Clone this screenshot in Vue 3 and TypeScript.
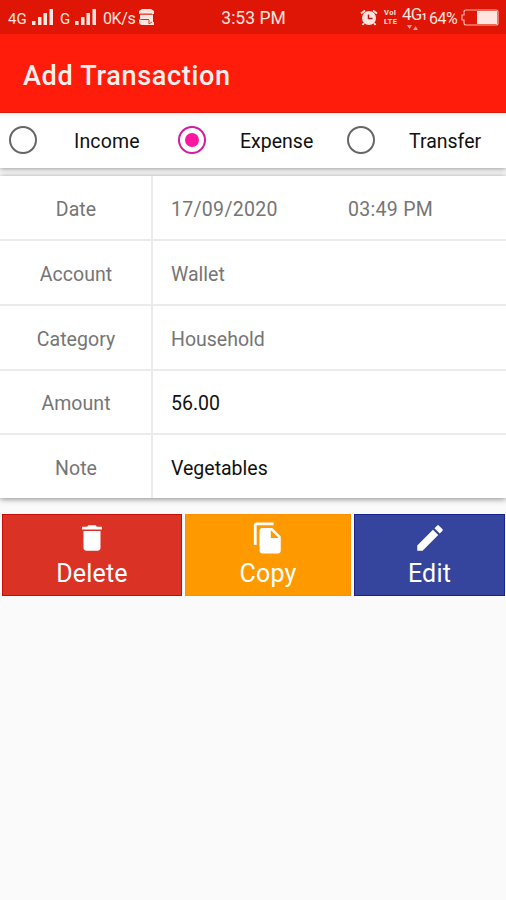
<script setup lang="ts">
interface Choice { id: string; label: string }
interface Row { label: string; value: string; extra?: string; strong?: boolean }

const selected = 'expense'
const choices: Choice[] = [
  { id: 'income', label: 'Income' },
  { id: 'expense', label: 'Expense' },
  { id: 'transfer', label: 'Transfer' },
]
const rows: Row[] = [
  { label: 'Date', value: '17/09/2020', extra: '03:49 PM' },
  { label: 'Account', value: 'Wallet' },
  { label: 'Category', value: 'Household' },
  { label: 'Amount', value: '56.00', strong: true },
  { label: 'Note', value: 'Vegetables', strong: true },
]
const actions = [
  { id: 'delete', label: 'Delete', path: 'M6 19c0 1.100.9 2 2 2h8c1.100 0 2-.9 2-2V7H6v12zM19 4h-3.500l-1-1h-5l-1 1H5v2h14V4z' },
  { id: 'copy', label: 'Copy', path: 'M16 1H4c-1.100 0-2 .9-2 2v14h2V3h12V1zm-1 4l6 6v10c0 1.100-.9 2-2 2H7.990C6.890 23 6 22.100 6 21l.01-14c0-1.100.89-2 1.990-2h7zm-1 7h5.500L14 6.500V12z' },
  { id: 'edit', label: 'Edit', path: 'M3 17.250V21h3.750L17.810 9.940l-3.750-3.750L3 17.250zM20.710 7.040c.39-.39.39-1.020 0-1.410l-2.340-2.340c-.39-.39-1.020-.39-1.410 0l-1.830 1.830 3.750 3.750 1.830-1.830z' },
]
</script>

<template>
  <main class="screen">
    <div class="status">
      <div class="left">
        <span class="net">4G</span>
        <svg class="bars" viewBox="0 0 21 16"><path d="M0 12h3.500v4H0zM6 8h3.500v8H6zM11.500 4H15v12h-3.500zM17.500 0H21v16h-3.500z" /></svg>
        <span class="net g">G</span>
        <svg class="bars" viewBox="0 0 21 16"><path d="M0 12h3.500v4H0zM6 8h3.500v8H6zM11.500 4H15v12h-3.500zM17.500 0H21v16h-3.500z" /></svg>
        <span class="speed">0K/s</span>
        <svg class="storage" viewBox="0 0 16 17"><path d="M3 0h9l3 2v3H0V2zM1 5.500h13V10H1zM0 10.500h10V16H2l-2-2z" /><path class="cut" d="M1 5h12M2 10.500h9" /><path d="M10 10h4v3h1v3h-5z" /><path class="cut" d="M10 11v4l3-2" /></svg>
      </div>
      <span class="clock">3:53 PM</span>
      <div class="right">
        <svg class="alarm" viewBox="0 0 18 17"><circle cx="9" cy="9" r="7" /><path class="line" d="M1 4.500l4-3M13 1.500l4 3M4 14l-1.500 2M14 14l1.500 2" /><path class="hand" d="M8.500 5.500v4h4" /></svg>
        <span class="volte"><span>VoI</span><span>LTE</span></span>
        <span class="data"><span>4G</span><small>1</small>
          <svg viewBox="0 0 12 5"><path d="M0 0h5L2.500 4zM6 5h5L8.500 1z" /></svg>
        </span>
        <span class="percent">64%</span>
        <svg class="battery" viewBox="0 0 38 17"><path class="outline" d="M5 1h30q2 0 2 2v11q0 2-2 2H5q-2 0-2-2v-3H1V6h2V3q0-2 2-2z" /><path d="M16 2h20v13H16z" /></svg>
      </div>
    </div>
    <header><h1>Add Transaction</h1></header>
    <div class="choices">
      <label v-for="c in choices" :key="c.id" :class="['choice', c.id]">
        <span :class="['radio', { on: c.id === selected }]"></span>
        <span class="name">{{ c.label }}</span>
      </label>
    </div>
    <section class="card">
      <div v-for="r in rows" :key="r.label" class="row">
        <div class="label">{{ r.label }}</div>
        <div :class="['value', { strong: r.strong, dated: r.extra }]">
          <span class="main">{{ r.value }}</span><span v-if="r.extra" class="time">{{ r.extra }}</span>
        </div>
      </div>
    </section>
    <nav class="actions">
      <button v-for="a in actions" :key="a.id" :class="a.id" type="button">
        <svg viewBox="0 0 24 24"><path :d="a.path" /></svg>
        <span>{{ a.label }}</span>
      </button>
    </nav>
  </main>
</template>

<style>
body { background: #fafafa; }
</style>

<style scoped>
.screen { height: 900px; overflow: hidden; background: #fafafa; font-family: Roboto, sans-serif; color: #111; }
.status { height: 34px; background: #df1505; color: #ffe5df; display: grid; grid-template-columns: 200px 107px 1fr; align-items: center; white-space: nowrap; }
.status svg { fill: currentColor; display: block; flex: none; }
.left { display: flex; align-items: center; padding: 3px 0 0 8px; font-size: 15px; }
.net { width: 24px; line-height: 17px; padding-top: 1px; }
.net.g { width: 15px; margin-left: 7px; }
.bars { width: 21px; height: 16px; margin-top: -3px; }
.speed { width: 36px; margin-left: 7px; font-size: 16px; line-height: 17px; letter-spacing: -.4px; }
.storage { width: 16px; height: 17px; margin-top: -3px; }
.cut { fill: none; stroke: #df1505; stroke-width: .8; }
.clock { font-size: 17.5px; text-align: center; padding: 1px 0 0 0; }
.right { display: flex; align-items: center; padding-left: 53px; }
.alarm { width: 18px; height: 17px; }
.alarm .line { stroke: currentColor; stroke-width: 2; }
.hand { fill: none; stroke: #b41b12; stroke-width: 1.5; }
.volte { display: flex; flex-direction: column; width: 17px; margin-left: 6px; font-size: 7.5px; line-height: 9px; font-weight: 700; letter-spacing: .4px; }
.data { position: relative; width: 27px; margin-left: 1px; font-size: 17px; line-height: 20px; padding-bottom: 3px; letter-spacing: -.7px; }
.data small { font-size: 9px; font-weight: 700; }
.data svg { position: absolute; left: 5px; bottom: 0; width: 12px; height: 5px; opacity: .65; }
.percent { width: 32px; font-size: 16px; padding-top: 2px; letter-spacing: -.5px; }
.battery { width: 38px; height: 17px; }
.outline { fill: none; stroke: #ffb4a5; stroke-width: 1.2; }
header { position: relative; z-index: 1; height: 79px; background: #ff1c0b; border-bottom: 1px solid #df1b0d; box-sizing: border-box; display: flex; align-items: center; padding: 5px 0 0 23px; }
h1 { margin: 0; font-size: 27px; line-height: 32px; font-weight: 500; color: #fff0ed; letter-spacing: .7px; }
.choices { height: 55px; display: grid; grid-template-columns: 169px 169px 168px; background: linear-gradient(#f1f3f1, #fff 6px); box-shadow: 0 1px 5px #0006; }
.choice { display: flex; align-items: center; padding-left: 9px; }
.radio { width: 28px; height: 28px; margin-bottom: 1px; box-sizing: border-box; border: 2px solid #666; border-radius: 50%; display: grid; place-items: center; flex: none; }
.radio.on { border-color: #d41ba2; }
.radio.on::after { content: ''; width: 14px; height: 14px; border-radius: 50%; background: #fa169f; }
.name { margin-left: 37px; padding-top: 1px; font-size: 19.5px; }
.income .name { letter-spacing: .15px; }
.expense .name, .transfer .name { margin-left: 34px; }
.card { margin-top: 8px; height: 322px; background: #fff; box-shadow: 0 1px 6px #0007; display: grid; grid-template-rows: 65px 65px 65px 64px 63px; font-size: 19.5px; color: #757575; position: relative; }
.row { display: grid; grid-template-columns: 153px 1fr; border-bottom: 2px solid #ebebeb; }
.row:last-child { border-bottom: 0; }
.label { display: grid; place-items: center; border-right: 2px solid #ebebeb; padding: 4px 0 0 1px; letter-spacing: .05px; }
.value { display: flex; align-items: center; padding: 4px 0 0 18px; }
.row:nth-child(4) .label, .row:nth-child(4) .value { padding-top: 2px; }
.dated { letter-spacing: .3px; }
.strong { color: #111; }
.main { width: 177px; }
.actions { height: 82px; margin-top: 16px; padding: 0 1px 0 2px; display: grid; grid-template-columns: 180px 166px 151px; column-gap: 3px; }
button { border: 1px solid; padding: 6px 0 0; color: #fff; font-family: inherit; font-size: 25px; display: flex; flex-direction: column; align-items: center; }
button svg { width: 34px; height: 34px; fill: #fff; }
button span { line-height: 32px; margin-top: 3px; letter-spacing: .2px; }
.delete { background: #da3325; border-color: #c90d0b; }
.copy { background: #ff9900; border-color: #ff9100; }
.edit { background: #35459d; border-color: #142591; }
</style>
